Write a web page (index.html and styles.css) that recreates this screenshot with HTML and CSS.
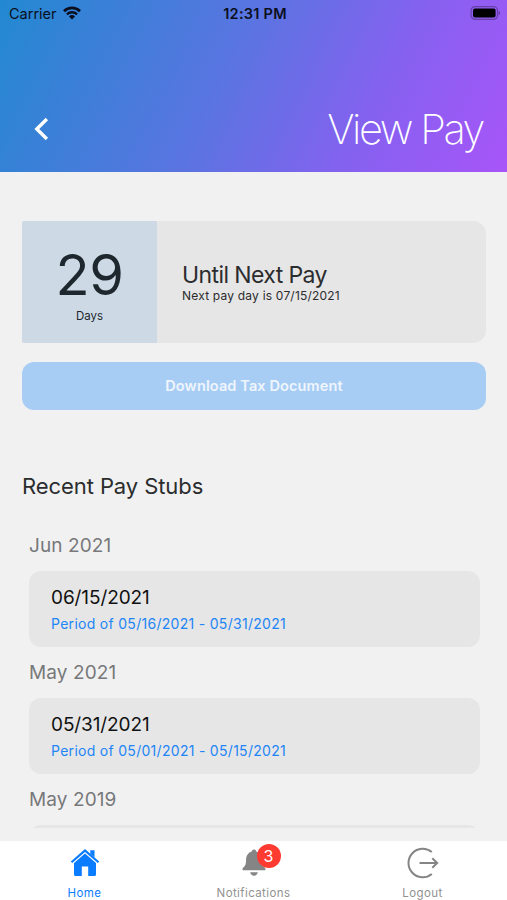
FILE: index.html
```html
<!DOCTYPE html>
<html lang="en">
  <head>
    <meta charset="UTF-8" />
    <meta name="viewport" content="width=device-width, initial-scale=1.0" />
    <title>View Pay</title>
    <link rel="stylesheet" href="styles.css">
  </head>
  <body>
    <header class="header">
      <div class="status-bar">
        <div class="carrier">
          <span class="carrier-name">Carrier</span>
          <svg width="18" height="14" viewBox="0 0 18 14">
            <path d="M1 5.2a11.4 11.4 0 0 1 16 0" fill="none" stroke="#0a0f20" stroke-width="2.7" />
            <path d="M3.9 8.3a7.4 7.4 0 0 1 10.2 0" fill="none" stroke="#0a0f20" stroke-width="2.3" />
            <path d="M9 13.6L5.9 10.5a4.6 4.6 0 0 1 6.2 0z" fill="#0a0f20" />
          </svg>
        </div>
        <span class="clock">12:31 PM</span>
        <svg class="battery" width="31" height="14" viewBox="0 0 31 14">
          <rect x="1.1" y=".6" width="26.4" height="12.8" rx="4" fill="none" stroke="#000" stroke-opacity=".3" stroke-width="1.2" />
          <rect x="3" y="2.500" width="22.600" height="9" rx="2" />
          <path d="M28.700 4.8a2.6 2.6 0 0 1 0 4.4z" fill-opacity=".4" />
        </svg>
      </div>
      <div class="title-row">
        <svg class="back" width="16" height="24" viewBox="0 0 16 24">
          <path d="M13.9 2L3.800 12l10.100 10" fill="none" stroke="#fff" stroke-width="3.4" />
        </svg>
        <h1>View Pay</h1>
      </div>
    </header>

    <main class="content">
      <section class="next-pay">
        <div class="days">
          <span class="days-count">29</span>
          <span class="days-label">Days</span>
        </div>
        <div class="next-pay-info">
          <h2>Until Next Pay</h2>
          <p>Next pay day is 07/15/2021</p>
        </div>
      </section>
      <button class="download-button">Download Tax Document</button>

      <h2 class="section-title">Recent Pay Stubs</h2>
      <div class="stub-list">
        <h3>Jun 2021</h3>
        <div class="stub">
          <span class="stub-date">06/15/2021</span>
          <span class="stub-period">Period of 05/16/2021 - 05/31/2021</span>
        </div>
        <h3>May 2021</h3>
        <div class="stub">
          <span class="stub-date">05/31/2021</span>
          <span class="stub-period">Period of 05/01/2021 - 05/15/2021</span>
        </div>
        <h3>May 2019</h3>
        <div class="stub"></div>
      </div>
    </main>

    <nav class="tab-bar">
      <a class="tab active">
        <svg width="30" height="28" viewBox="0 0 30 28">
          <path d="M15 0L29.2 12.6 27.8 14.1 15 2.9 2.2 14.1.8 12.6z" />
          <path d="M20.3 1.2h4.2v7.2l-4.2-3.7z" />
          <path d="M15 4.5L26 14v11.4q0 1.6-1.6 1.6h-6.2v-9.6h-6.4V27H5.6q-1.6 0-1.6-1.6V14z" />
        </svg>
        <span>Home</span>
      </a>
      <a class="tab notifications">
        <svg width="28" height="28" viewBox="0 0 28 28">
          <path d="M14 .6c1.3 0 2.1.8 2.2 2 3.6 1 5.6 4 5.700 8 .1 5 .9 6.700 3.200 8.500.7.6.6 2.200-.6 2.200h-21c-1.200 0-1.300-1.600-.6-2.200 2.300-1.800 3.100-3.500 3.200-8.500.1-4 2.100-7 5.700-8 .1-1.200.9-2 2.200-2z" />
          <path d="M10.2 23.3h7.6c-.5 2.200-1.800 3.400-3.800 3.400s-3.300-1.200-3.800-3.400z" />
        </svg>
        <b class="badge">3</b>
        <span>Notifications</span>
      </a>
      <a class="tab">
        <svg class="logout-icon" width="32" height="32" viewBox="0 0 32 32">
          <path d="M24.8 5.1A14.2 14.2 0 1 0 24.8 26.9M12.5 16H30M25.3 11.2L30.2 16l-4.900 4.800" />
        </svg>
        <span>Logout</span>
      </a>
    </nav>
  </body>
</html>
```

FILE: styles.css
```css
* {
  box-sizing: border-box;
}

body {
  margin: 0;
  height: 900px;
  display: flex;
  flex-direction: column;
  overflow: hidden;
  background-color: #f1f1f1;
  font-family: Inter, "Liberation Sans", sans-serif;
  color: #2b2c2e;
}

h1,
h2,
h3,
p {
  margin: 0;
  font-weight: 400;
}

.header {
  height: 172px;
  flex: none;
  background: linear-gradient(116deg, #2289d1 0%, #5b74e1 45%, #8661f0 73%, #a855f8 100%);
}

.status-bar {
  height: 27px;
  padding: 0 6px 0 9px;
  display: grid;
  grid-template-columns: 1fr auto 1fr;
  align-items: center;
  color: #0a0f20;
  font-size: 14.5px;
}

.carrier {
  display: flex;
  align-items: center;
  gap: 6px;
}

.carrier svg {
  margin-top: -1px;
}

.clock {
  font-weight: 600;
  letter-spacing: 0.25px;
}

.battery {
  justify-self: end;
  margin-top: -1px;
}

.title-row {
  display: flex;
  align-items: center;
  justify-content: space-between;
  padding: 77px 24px 0 33px;
}

.title-row h1 {
  color: #fff;
  font-size: 41.5px;
  font-weight: 200;
  line-height: 50px;
  letter-spacing: -2.4px;
}

.content {
  flex: 1;
  min-height: 0;
  padding: 49px 21px 13px 22px;
  display: flex;
  flex-direction: column;
}

.next-pay {
  display: flex;
  flex: none;
  height: 122px;
  background-color: #e6e6e6;
  border-radius: 2px 13px 13px 2px;
  overflow: hidden;
}

.days {
  width: 135px;
  background-color: #cddae6;
  display: flex;
  flex-direction: column;
  align-items: center;
  color: #1d272d;
}

.days-count {
  font-size: 56px;
  line-height: 68px;
  margin-top: 20px;
  letter-spacing: -0.5px;
}

.days-label {
  font-size: 11.5px;
  line-height: 14px;
}

.next-pay-info {
  padding: 40px 0 0 25px;
}

.next-pay-info h2 {
  font-size: 23px;
  line-height: 28px;
  letter-spacing: -0.6px;
}

.next-pay-info p {
  font-size: 12px;
  line-height: 14px;
  letter-spacing: 0.2px;
}

.download-button {
  flex: none;
  height: 48px;
  margin-top: 19px;
  padding-bottom: 2px;
  border: none;
  border-radius: 12px;
  background-color: #a7cdf5;
  color: #eff5fc;
  font-family: inherit;
  font-size: 14.5px;
  font-weight: 600;
  letter-spacing: 0.12px;
}

.section-title {
  margin-top: 62px;
  font-size: 22px;
  line-height: 28px;
  letter-spacing: -0.08px;
}

.stub-list {
  flex: 1;
  min-height: 0;
  margin-top: 32px;
  padding: 0 6px 0 7px;
  overflow: hidden;
}

.stub-list h3 {
  height: 51px;
  padding-top: 14px;
  font-size: 19px;
  line-height: 24px;
  letter-spacing: 0.1px;
  color: #77787a;
}

.stub-list h3:first-child {
  height: 39px;
  padding-top: 2px;
}

.stub {
  height: 76px;
  padding: 14px 22px;
  display: flex;
  flex-direction: column;
  background-color: #e6e6e6;
  border-radius: 12px;
}

.stub-date {
  font-size: 19px;
  line-height: 25px;
  letter-spacing: -0.1px;
  color: #111;
}

.stub-period {
  margin-top: 5px;
  font-size: 14px;
  line-height: 18px;
  letter-spacing: 0.29px;
  color: #2285f6;
}

.tab-bar {
  flex: none;
  height: 59px;
  display: flex;
  background-color: #fff;
}

.tab {
  position: relative;
  flex: 1;
  display: flex;
  flex-direction: column;
  align-items: center;
  padding-top: 8px;
  color: #929292;
  font-size: 11.5px;
  line-height: 14px;
  letter-spacing: 0.4px;
}

.tab svg {
  flex: none;
  fill: #858585;
}

.tab span {
  margin-top: auto;
}

.tab.active {
  color: #0a7cff;
}

.tab.active svg {
  fill: #0a7cff;
}

.tab .logout-icon {
  margin-top: -2px;
  fill: none;
  stroke: #858585;
  stroke-width: 2;
}

.badge {
  position: absolute;
  top: 3px;
  left: calc(50% + 3px);
  width: 24px;
  height: 24px;
  border-radius: 50%;
  background-color: #fd3b30;
  color: #fff;
  font-size: 16px;
  font-weight: 400;
  line-height: 24px;
  letter-spacing: 0;
  text-align: center;
}
```
